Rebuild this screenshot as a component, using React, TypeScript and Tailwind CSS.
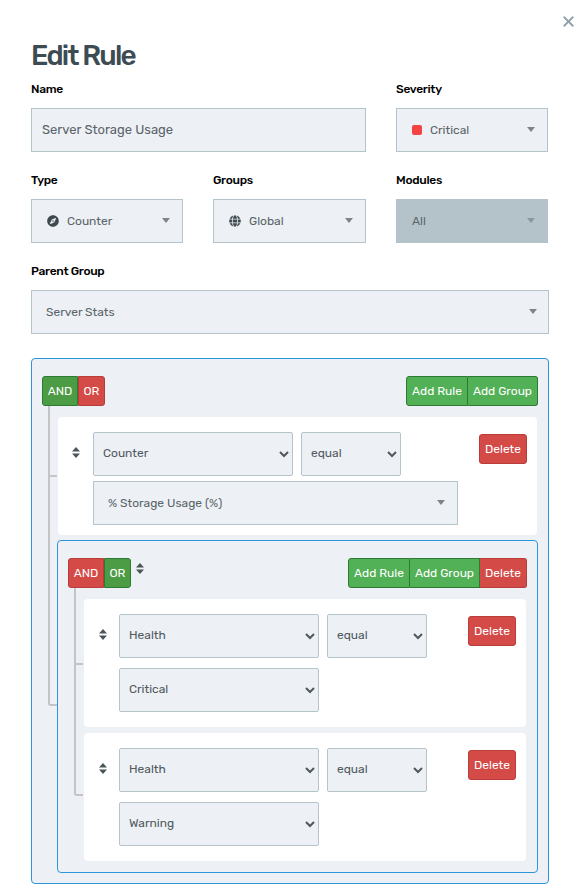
import { FaCompass, FaGlobe } from 'react-icons/fa';
import { X } from 'lucide-react';

const btnGreen = 'bg-[#52b056] border border-[#2f7a33] text-white';
const btnRed = 'bg-[#d44a47] border border-[#b83c3a] text-white';

function Caret({ className = 'border-t-[#7d8589]' }: { className?: string }) {
  return <span className={`w-0 h-0 border-x-[4px] border-x-transparent border-t-[5px] ${className}`} />;
}

function SortIcon({ className = '' }: { className?: string }) {
  return (
    <svg viewBox="0 0 8 11" className={`w-[8px] h-[11px] shrink-0 text-[#4a5459] ${className}`} fill="currentColor">
      <path d="M4 0 8 4.5H0zM0 6.5h8L4 11z" />
    </svg>
  );
}

function FieldLabel({ text }: { text: string }) {
  return <label className="block text-[12px] leading-[16px] font-medium tracking-[-0.3px] text-black mb-[11px]">{text}</label>;
}

function DropBox({ children, className = 'bg-[#edf0f4] border-[#b5c3cb]' }: { children: React.ReactNode; className?: string }) {
  return (
    <div className={`h-[44px] flex items-center justify-between border pb-[1px] text-[12px] text-[#5a646b] ${className}`}>
      {children}
    </div>
  );
}

function RuleSelect({ value, className = 'w-[200px]' }: { value: string; className?: string }) {
  return (
    <select
      defaultValue={value}
      className={`h-[44px] pl-[5px] pb-[2px] bg-[#edf0f4] border border-[#b5c3cb] rounded-[2px] text-[12px] text-[#50595f] ${className}`}
    >
      <option>{value}</option>
    </select>
  );
}

function DeleteBtn() {
  return (
    <button className={`h-[30px] w-[48px] rounded-[3px] text-[12px] ${btnRed}`}>Delete</button>
  );
}

function Combinator({ active }: { active: 'AND' | 'OR' }) {
  return (
    <div className="flex h-[30px] text-[12px]">
      <button className={`w-[36px] rounded-l-[3px] ${active === 'AND' ? 'bg-[#4c9c46] border border-[#2f7a33] text-white' : btnRed}`}>AND</button>
      <button className={`w-[27px] rounded-r-[3px] ${active === 'OR' ? 'bg-[#4c9c46] border border-[#2f7a33] text-white' : btnRed}`}>OR</button>
    </div>
  );
}

function Branch({ top, height, left, rounded }: { top: string; height: string; left: string; rounded: string }) {
  return <div className={`absolute border-l-2 border-b-2 border-[#c4c4c4] rounded-bl-[3px] ${top} ${height} ${left} ${rounded}`} />;
}

function Rule({ field, value }: { field: string; value: string }) {
  return (
    <div className="bg-white rounded-[4px] h-[128px] pl-[15px] pr-[10px] pt-[15px] flex">
      <SortIcon className="mt-[15px] mr-[12px]" />
      <div className="flex flex-col gap-[10px]">
        <div className="flex gap-[8px]">
          <RuleSelect value={field} />
          <RuleSelect value="equal" className="w-[100px]" />
        </div>
        <RuleSelect value={value} />
      </div>
      <div className="ml-auto mt-[2px]">
        <DeleteBtn />
      </div>
    </div>
  );
}

export default function App() {
  return (
    <div className="relative h-[896px] w-[582px] overflow-hidden bg-white pl-[31px] pr-[33px] pt-[38px] font-['Rubik','Inter',sans-serif]">
      <X className="absolute top-[13px] left-[560px] w-[17px] h-[17px] text-[#8fa0a9]" strokeWidth={2.5} />
      <h1 className="text-[28px] leading-[36px] font-medium text-[#3d4b53] tracking-[-1.8px] mb-[7px]">Edit Rule</h1>

      <div className="flex gap-[30px] mb-[20px]">
        <div className="flex-1">
          <FieldLabel text="Name" />
          <DropBox className="px-[10px] text-[13px] bg-[#edf0f4] border-[#b5c3cb]">Server Storage Usage</DropBox>
        </div>
        <div className="w-[152px] mr-[1px]">
          <FieldLabel text="Severity" />
          <DropBox className="pl-[15px] pr-[12px] bg-[#edf0f4] border-[#b5c3cb]">
            <span className="flex items-center gap-[8px]">
              <span className="w-[10px] h-[10px] rounded-[2px] bg-[#f44343]" />
              Critical
            </span>
            <Caret />
          </DropBox>
        </div>
      </div>

      <div className="flex gap-[30px] mb-[20px]">
        <div className="w-[152px]">
          <FieldLabel text="Type" />
          <DropBox className="pl-[15px] pr-[12px] bg-[#edf0f4] border-[#b5c3cb]">
            <span className="flex items-center gap-[8px]">
              <FaCompass className="w-[12px] h-[12px] text-[#3f4a50]" />
              Counter
            </span>
            <Caret />
          </DropBox>
        </div>
        <div className="w-[153px]">
          <FieldLabel text="Groups" />
          <DropBox className="pl-[15px] pr-[12px] bg-[#edf0f4] border-[#b5c3cb]">
            <span className="flex items-center gap-[8px]">
              <FaGlobe className="w-[12px] h-[12px] text-[#3f4a50]" />
              Global
            </span>
            <Caret />
          </DropBox>
        </div>
        <div className="w-[152px]">
          <FieldLabel text="Modules" />
          <DropBox className="pl-[15px] pr-[12px] bg-[#b4c3ca] border-[#b4c3ca]">
            All
            <Caret className="border-t-[#8a969c]" />
          </DropBox>
        </div>
      </div>

      <FieldLabel text="Parent Group" />
      <DropBox className="pl-[14px] pr-[11px] mb-[24px] bg-[#edf0f4] border-[#b5c3cb]">
        Server Stats
        <Caret />
      </DropBox>

      <div className="relative h-[526px] bg-[#edf0f4] border border-[#2b96dc] rounded-[4px] pl-[10px] pr-[10px] pt-[17px]">
        <Branch top="top-[47px]" height="h-[300px]" left="left-[16px]" rounded="w-[9px]" />
        <div className="absolute top-[116px] left-[16px] w-[9px] h-[2px] bg-[#c4c4c4]" />

        <div className="flex justify-between">
          <Combinator active="AND" />
          <div className="flex h-[30px] text-[12px]">
            <button className={`w-[62px] rounded-l-[3px] ${btnGreen}`}>Add Rule</button>
            <button className={`w-[70px] rounded-r-[3px] border-l-0 ${btnGreen}`}>Add Group</button>
          </div>
        </div>

        <div className="mt-[11px] ml-[16px] mr-[1px] bg-white rounded-[4px] h-[118px] pl-[14px] pr-[10px] pt-[15px] flex">
          <SortIcon className="mt-[15px] mr-[13px]" />
          <div className="flex flex-col gap-[5px]">
            <div className="flex gap-[8px]">
              <RuleSelect value="Counter" />
              <RuleSelect value="equal" className="w-[100px]" />
            </div>
            <DropBox className="w-[365px] pl-[14px] pr-[12px] bg-[#edf0f4] border-[#b5c3cb]">
              % Storage Usage (%)
              <Caret />
            </DropBox>
          </div>
          <div className="ml-auto mt-[2px]">
            <DeleteBtn />
          </div>
        </div>

        <div className="relative mt-[5px] ml-[15px] h-[333px] border border-[#2b96dc] rounded-[4px] pl-[10px] pr-[10px] pt-[17px]">
          <Branch top="top-[47px]" height="h-[208px]" left="left-[16px]" rounded="w-[9px]" />
          <div className="absolute top-[122px] left-[16px] w-[9px] h-[2px] bg-[#c4c4c4]" />

          <div className="flex justify-between">
            <div className="flex items-start gap-[5px]">
              <Combinator active="OR" />
              <SortIcon className="mt-[5px]" />
            </div>
            <div className="flex h-[30px] text-[12px]">
              <button className={`w-[62px] rounded-l-[3px] ${btnGreen}`}>Add Rule</button>
              <button className={`w-[70px] border-l-0 ${btnGreen}`}>Add Group</button>
              <button className={`w-[47px] rounded-r-[3px] border-l-0 ${btnRed}`}>Delete</button>
            </div>
          </div>

          <div className="mt-[11px] ml-[16px] mr-[1px] flex flex-col gap-[6px]">
            <Rule field="Health" value="Critical" />
            <Rule field="Health" value="Warning" />
          </div>
        </div>
      </div>
    </div>
  );
}
